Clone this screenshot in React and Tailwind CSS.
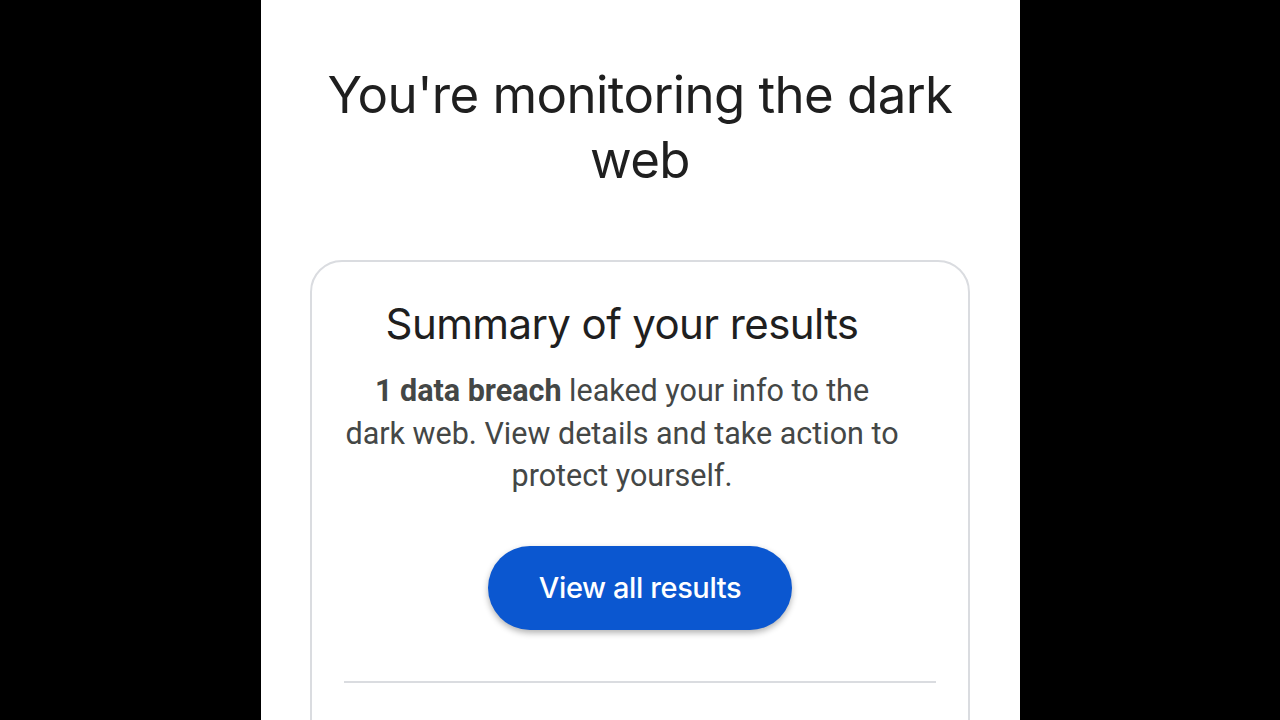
export default function App() {
  return (
    <div className="flex h-[720px] w-[1280px] justify-center overflow-hidden bg-black">
      <div className="flex w-[759px] flex-col items-center bg-white px-[40px] pt-[62px]">
        <h1 className="text-center font-['Inter',sans-serif] text-[51px] leading-[65px] font-normal tracking-[-0.6px] text-[#1f1f1f]">
          You're monitoring the dark web
        </h1>

        <div className="mt-[68px] w-[660px] shrink-0 rounded-[32px] border-2 border-[#dadce0] px-[32px] pt-[36px] pb-10">
          <div className="pr-[36px]">
            <h2 className="text-center font-['Inter',sans-serif] text-[42px] leading-[52px] font-normal tracking-[-0.6px] text-[#1f1f1f]">
              Summary of your results
            </h2>
            <p className="mt-[20px] text-center font-['Roboto',sans-serif] text-[30.5px] leading-[42.5px] text-[#444746]">
              <span className="font-bold">1 data breach</span> leaked your info to the
              <br />
              dark web. View details and take action to
              <br />
              protect yourself.
            </p>
          </div>

          <div className="mt-[48px] flex justify-center">
            <button className="h-[84px] w-[304px] rounded-full bg-[#0b57d0] font-['Inter',sans-serif] text-[29px] font-medium tracking-[-0.4px] text-white shadow-[0_3px_6px_rgba(0,0,0,0.3)]">
              View all results
            </button>
          </div>

          <div className="mt-[51px] h-[2px] bg-[#dadce0]" />
          <div className="h-[80px]" />
        </div>
      </div>
    </div>
  );
}
